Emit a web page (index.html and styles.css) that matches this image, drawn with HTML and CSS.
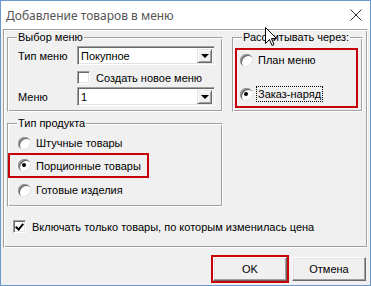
FILE: index.html
```html
<!DOCTYPE html>
<html lang="ru">

<head>
    <meta charset="UTF-8">
    <title>Добавление товаров в меню</title>
    <link rel="stylesheet" href="styles.css">
</head>

<body>
    <div class="window">
        <div class="titlebar">
            <span class="title">Добавление товаров в меню</span>
            <svg class="close" width="12" height="12" viewBox="0 0 12 12">
                <path d="M0.5 0.5 L11.5 11.5 M11.5 0.5 L0.5 11.5" stroke="#333" stroke-width="1" fill="none" />
            </svg>
        </div>
        <div class="client">
            <div class="panel">
                <div class="row_top">
                    <div class="group g_menu">
                        <span class="caption">Выбор меню</span>
                        <div class="field">
                            <span class="label">Тип меню</span>
                            <div class="combo">
                                <span class="combo_text">Покупное</span>
                                <span class="combo_btn"><i class="arrow"></i></span>
                            </div>
                        </div>
                        <div class="check_line new_menu">
                            <span class="check"></span>
                            <span>Создать новое меню</span>
                        </div>
                        <div class="field field_menu">
                            <span class="label">Меню</span>
                            <div class="combo">
                                <span class="combo_text">1</span>
                                <span class="combo_btn"><i class="arrow"></i></span>
                            </div>
                        </div>
                    </div>
                    <div class="group g_calc">
                        <span class="caption">Рассчитывать через:</span>
                        <div class="mark calc_box">
                            <div class="radio_line">
                                <span class="radio"></span>
                                <span>План меню</span>
                            </div>
                            <div class="radio_line">
                                <span class="radio on"></span>
                                <span class="focus">Заказ-наряд</span>
                            </div>
                        </div>
                    </div>
                </div>
                <div class="group g_type">
                    <span class="caption">Тип продукта</span>
                    <div class="radio_line type_line">
                        <span class="radio"></span>
                        <span>Штучные товары</span>
                    </div>
                    <div class="radio_line type_line mark">
                        <span class="radio on"></span>
                        <span>Порционные товары</span>
                    </div>
                    <div class="radio_line type_line">
                        <span class="radio"></span>
                        <span>Готовые изделия</span>
                    </div>
                </div>
                <div class="check_line price_line">
                    <span class="check on"></span>
                    <span>Включать только товары, по которым изменилась цена</span>
                </div>
            </div>
            <div class="buttons">
                <div class="btn btn_ok">OK</div>
                <div class="btn">Отмена</div>
            </div>
        </div>
        <svg class="cursor" width="12" height="20" viewBox="0 0 12 20">
            <path d="M0.5 0.5 L0.5 16.5 L4.5 12.5 L7 18.5 L9 17.5 L6.5 11.5 L11.5 11.5 Z" fill="#fff" stroke="#000" stroke-width="1" />
        </svg>
    </div>
</body>

</html>
```

FILE: styles.css
```css
* {
    margin: 0;
    padding: 0;
    box-sizing: border-box;
}

body {
    background-color: #fff;
    font-family: "Liberation Sans", Arial, sans-serif;
    font-size: 11px;
    color: #000;
}

.window {
    position: relative;
    width: 371px;
    height: 286px;
    border: 1px solid #6b98cd;
    background-color: #f0f0f0;
    overflow: hidden;
}

.titlebar {
    height: 28px;
    background-color: #fff;
    display: flex;
    align-items: center;
    justify-content: space-between;
    padding: 0 8px 0 5px;
}

.title {
    font-family: "Noto Sans", sans-serif;
    font-size: 12px;
    color: #555;
}

.client {
    padding: 0 4px 0 2px;
}

.panel {
    width: 365px;
    height: 219px;
    border: 1px solid #a0a0a0;
    border-right-color: #fff;
    border-bottom-color: #fff;
    box-shadow: inset 1px 1px 0 #fff, inset -1px -1px 0 #a0a0a0;
    padding: 7px 0 0 3px;
}

.row_top {
    display: flex;
    gap: 9px;
}

.group {
    position: relative;
    border: 1px solid #a0a0a0;
    border-right-color: #fff;
    border-bottom-color: #fff;
    box-shadow: inset 1px 1px 0 #fff, inset -1px -1px 0 #a0a0a0;
}

.caption {
    position: absolute;
    top: -7px;
    left: 9px;
    padding: 0 1px;
    background-color: #f0f0f0;
    line-height: 13px;
}

.g_menu {
    width: 216px;
    height: 75px;
    padding: 8px 0 0 10px;
}

.g_calc {
    width: 131px;
    height: 75px;
    padding: 10px 0 0 2px;
}

.g_type {
    width: 216px;
    height: 84px;
    margin-top: 11px;
    padding-top: 7px;
}

.field {
    display: flex;
    align-items: center;
}

.label {
    width: 59px;
}

.field_menu {
    margin-top: 3px;
}

.combo {
    width: 138px;
    height: 19px;
    display: flex;
    align-items: center;
    justify-content: space-between;
    background-color: #fff;
    border: 1px solid #a0a0a0;
    border-right-color: #fff;
    border-bottom-color: #fff;
    box-shadow: inset 1px 1px 0 #696969, inset -1px -1px 0 #e3e3e3;
    padding: 2px;
}

.combo_text {
    padding-left: 1px;
}

.combo_btn {
    width: 15px;
    height: 14px;
    display: flex;
    align-items: center;
    justify-content: center;
    background-color: #f0f0f0;
    border: 1px solid #e3e3e3;
    border-right-color: #696969;
    border-bottom-color: #696969;
    box-shadow: inset 1px 1px 0 #fff, inset -1px -1px 0 #a0a0a0;
}

.arrow {
    width: 0;
    height: 0;
    border-left: 4px solid transparent;
    border-right: 4px solid transparent;
    border-top: 4px solid #000;
    margin-top: 1px;
}

.check_line {
    display: flex;
    align-items: center;
    gap: 6px;
}

.new_menu {
    margin: 6px 0 0 59px;
}

.check {
    position: relative;
    width: 13px;
    height: 13px;
    background-color: #fff;
    border: 1px solid #a0a0a0;
    border-right-color: #fff;
    border-bottom-color: #fff;
    box-shadow: inset 1px 1px 0 #696969, inset -1px -1px 0 #e3e3e3;
}

.check.on::after {
    content: "";
    position: absolute;
    left: 3px;
    top: 1px;
    width: 3px;
    height: 6px;
    border-right: 2px solid #000;
    border-bottom: 2px solid #000;
    transform: rotate(40deg);
}

.price_line {
    margin: 13px 0 0 6px;
}

.radio_line {
    display: flex;
    align-items: center;
    gap: 5px;
}

.radio {
    position: relative;
    width: 13px;
    height: 13px;
    border-radius: 50%;
    background-color: #fff;
    box-shadow: inset 1px 1px 0 #a0a0a0, inset 2px 2px 0 #696969, inset -1px -1px 0 #e3e3e3;
}

.radio.on::after {
    content: "";
    position: absolute;
    left: 4px;
    top: 4px;
    width: 4px;
    height: 4px;
    border-radius: 50%;
    background-color: #000;
}

.type_line {
    height: 24px;
    width: 141px;
    padding-left: 8px;
    border: 2px solid transparent;
}

.type_line.mark {
    height: 25px;
    margin-top: -2px;
    border-color: #c8000a;
}

.mark {
    border: 2px solid #c8000a;
}

.calc_box {
    width: 123px;
    height: 60px;
    padding: 1px 0 0 3px;
}

.calc_box .radio_line {
    height: 18px;
}

.calc_box .radio_line+.radio_line {
    margin-top: 16px;
}

.focus {
    outline: 1px dotted #000;
    padding: 1px 1px;
    margin-left: -1px;
}

.buttons {
    display: flex;
    justify-content: flex-end;
    gap: 5px;
    margin-top: 9px;
}

.btn {
    width: 74px;
    height: 24px;
    display: flex;
    align-items: center;
    justify-content: center;
    background-color: #f0f0f0;
    border: 1px solid #fff;
    border-right-color: #696969;
    border-bottom-color: #696969;
    box-shadow: inset -1px -1px 0 #a0a0a0, inset 1px 1px 0 #e3e3e3;
}

.btn_ok {
    outline: 2px solid #c8000a;
    outline-offset: 0;
}

.cursor {
    position: absolute;
    left: 264px;
    top: 26px;
}
```
